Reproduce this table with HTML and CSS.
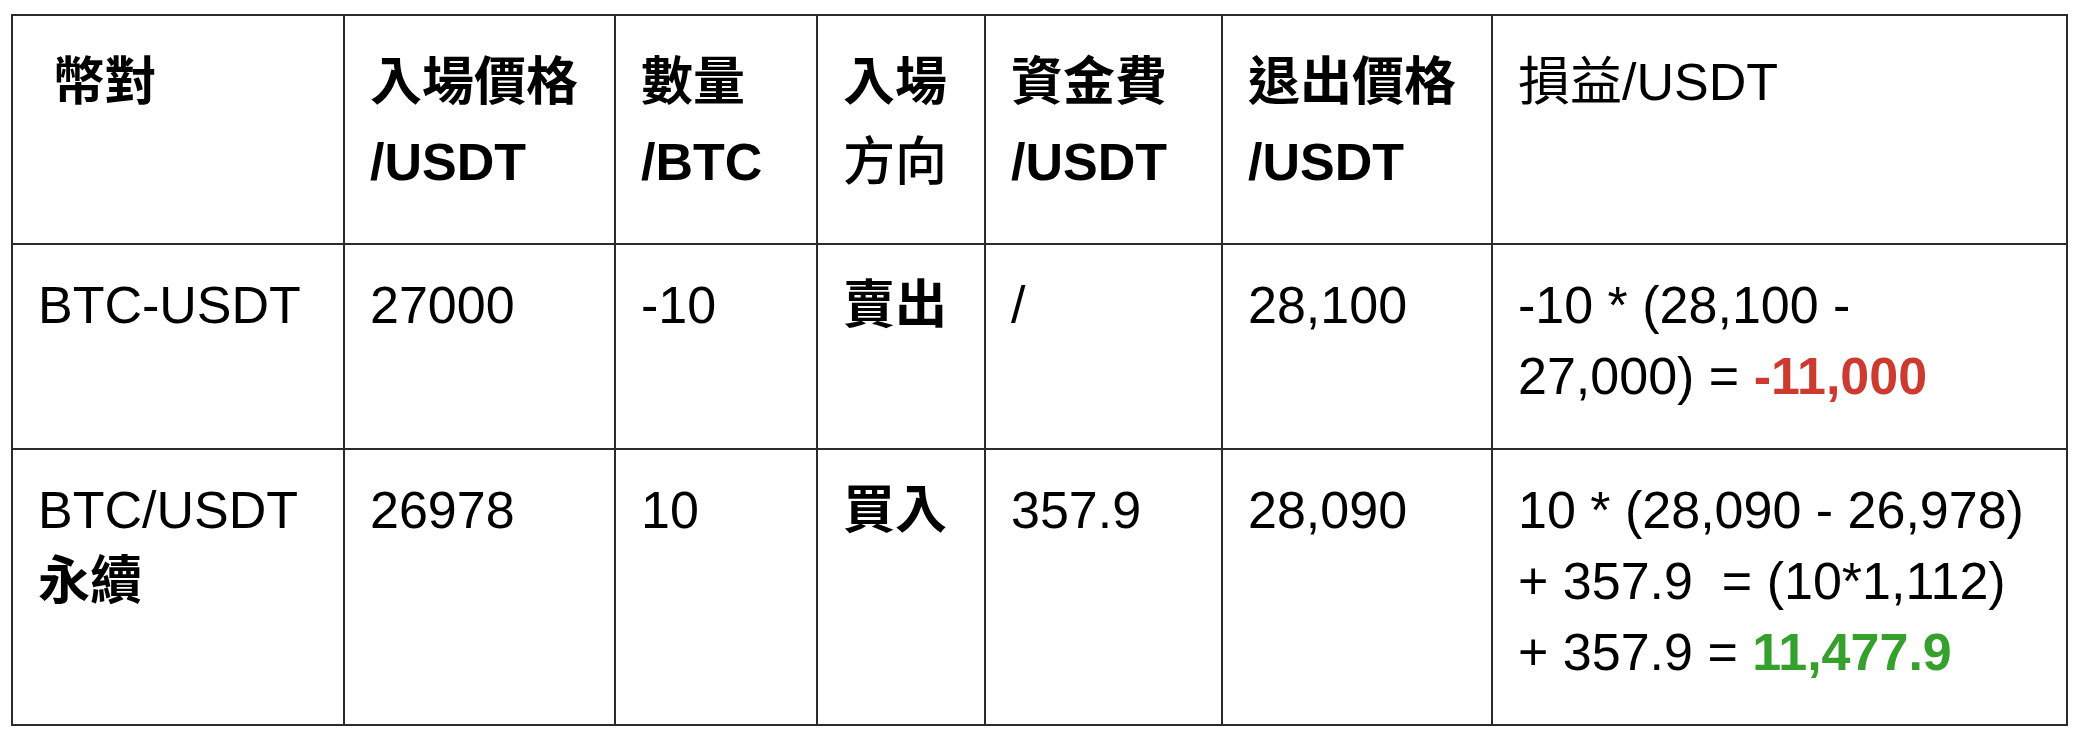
FILE: index.html
```html
<!DOCTYPE html>
<html lang="zh-Hant">
<head>
<meta charset="utf-8">
<title>損益計算</title>
<link rel="stylesheet" href="styles.css">
</head>
<body>
<table class="pnl">
  <colgroup>
    <col class="c1"><col class="c2"><col class="c3"><col class="c4"><col class="c5"><col class="c6"><col class="c7">
  </colgroup>
  <thead>
    <tr>
      <th>&nbsp;幣對</th>
      <th>入場價格<br>/USDT</th>
      <th>數量<br>/BTC</th>
      <th>入場<br><span class="med">方向</span></th>
      <th>資金費<br>/USDT</th>
      <th>退出價格<br>/USDT</th>
      <th class="reg">損益/USDT</th>
    </tr>
  </thead>
  <tbody>
    <tr>
      <td>BTC-USDT</td>
      <td>27000</td>
      <td>-10</td>
      <td class="b">賣出</td>
      <td>/</td>
      <td>28,100</td>
      <td>-10 * (28,100 -<br>27,000) = <span class="b loss">-11,000</span></td>
    </tr>
    <tr>
      <td>BTC/USDT<br><span class="b">永續</span></td>
      <td>26978</td>
      <td>10</td>
      <td class="b">買入</td>
      <td>357.9</td>
      <td>28,090</td>
      <td>10 * (28,090 - 26,978)<br>+ 357.9&nbsp; = (10*1,112)<br>+ 357.9 = <span class="b gain">11,477.9</span></td>
    </tr>
  </tbody>
</table>
</body>
</html>
```

FILE: styles.css
```css
html, body {
  margin: 0;
  padding: 0;
  background: #ffffff;
}

body {
  font-family: "Liberation Sans", Arial, "Noto Sans CJK TC", sans-serif;
  font-size: 52px;
  color: #000000;
}

.pnl {
  border-collapse: collapse;
  table-layout: fixed;
  width: 2055px;
  margin: 14px 0 0 11px;
}

.c1 { width: 332px; }
.c2 { width: 271px; }
.c3 { width: 202px; }
.c4 { width: 168px; }
.c5 { width: 237px; }
.c6 { width: 270px; }
.c7 { width: 575px; }

.pnl th,
.pnl td {
  border: 2px solid #2a2a2a;
  text-align: left;
  vertical-align: top;
  white-space: nowrap;
  padding-left: 25px;
  padding-right: 10px;
}

.pnl th {
  font-weight: 700;
  line-height: 80px;
  padding-top: 26px;
  padding-bottom: 41px;
}

.pnl td {
  font-weight: 400;
  line-height: 71px;
  padding-top: 25px;
  padding-bottom: 36px;
}

.pnl .reg {
  font-weight: 400;
}

.pnl .med {
  font-weight: 500;
}

.pnl .b {
  font-weight: 700;
}

.loss {
  color: #cc3a30;
}

.gain {
  color: #35a02b;
}
```
